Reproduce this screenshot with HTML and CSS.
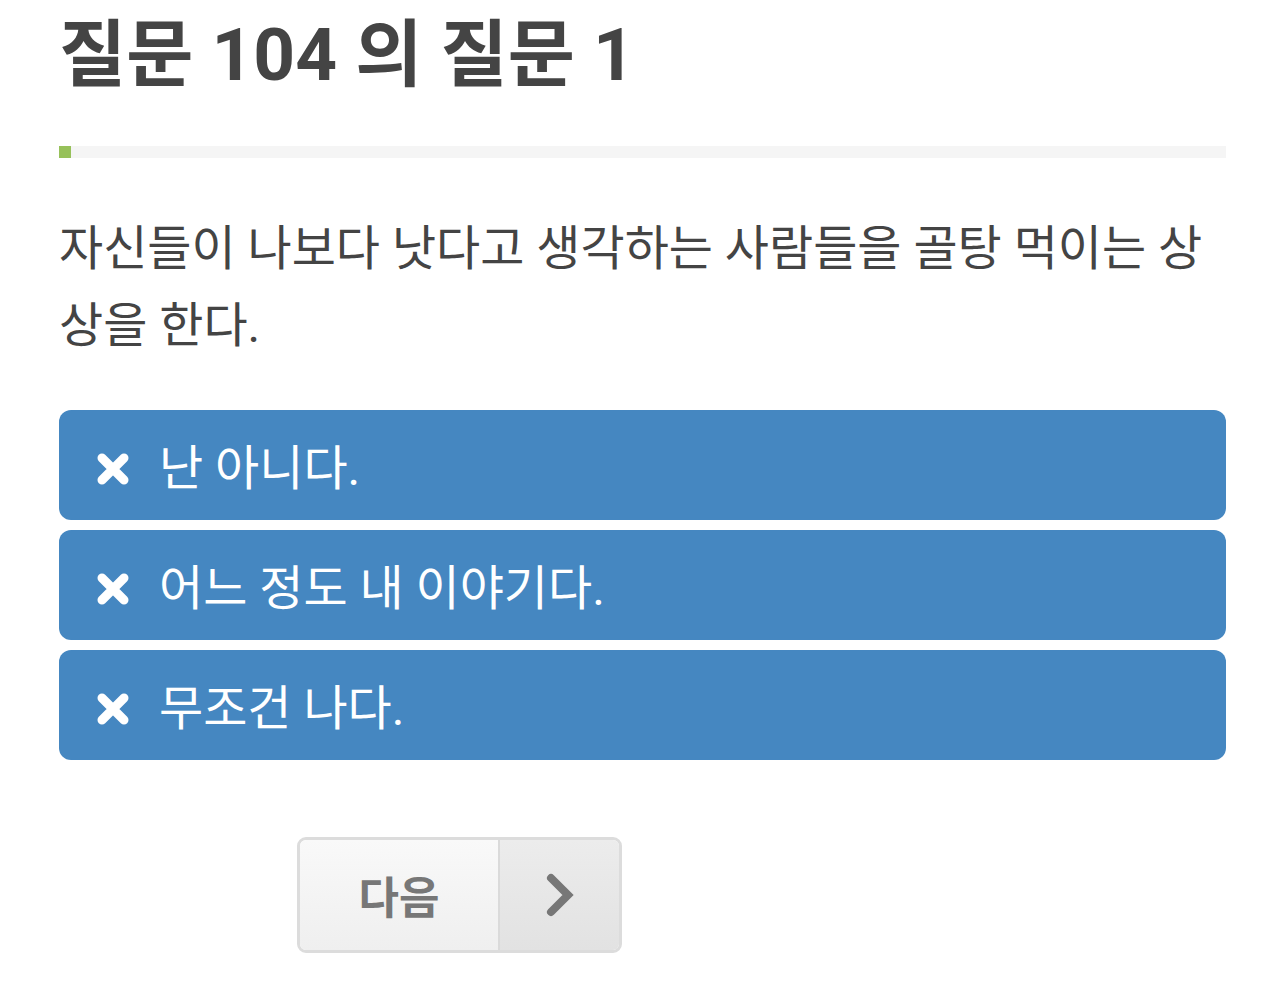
FILE: index.html
```html
<!DOCTYPE html>
<html lang="ko">
<head>
<meta charset="utf-8">
<link rel="stylesheet" href="styles.css">
</head>
<body>
<div class="page">
  <h1 class="title">질문 104 의 질문 1</h1>
  <div class="progress"><div class="progress-fill" style="width:12px"></div></div>
  <p class="question">자신들이 나보다 낫다고 생각하는 사람들을 골탕 먹이는 상상을 한다.</p>
  <div class="options">
    <div class="option">
      <svg class="x-icon" viewBox="0 0 34 34"><path d="M6 6 L28 28 M28 6 L6 28" stroke="#fff" stroke-width="9" stroke-linecap="round"/></svg>
      <span>난 아니다.</span>
    </div>
    <div class="option">
      <svg class="x-icon" viewBox="0 0 34 34"><path d="M6 6 L28 28 M28 6 L6 28" stroke="#fff" stroke-width="9" stroke-linecap="round"/></svg>
      <span>어느 정도 내 이야기다.</span>
    </div>
    <div class="option">
      <svg class="x-icon" viewBox="0 0 34 34"><path d="M6 6 L28 28 M28 6 L6 28" stroke="#fff" stroke-width="9" stroke-linecap="round"/></svg>
      <span>무조건 나다.</span>
    </div>
  </div>
  <div class="nav">
    <div class="next-btn">
      <span class="next-label">다음</span>
      <span class="next-arrow"><svg viewBox="0 0 30 44" width="30" height="44"><path d="M6 5 L23 22 L6 39" fill="none" stroke="#777" stroke-width="8" stroke-linecap="round" stroke-linejoin="miter"/></svg></span>
    </div>
  </div>
</div>
</body>
</html>
```
FILE: styles.css
```css
* { box-sizing: border-box; }
body {
  margin: 0;
  background: #fff;
  font-family: "Roboto", "Noto Sans CJK KR", sans-serif;
  color: #444;
}
.page {
  padding: 0 58px 0 59px;
  display: flex;
  flex-direction: column;
}
.title {
  margin: 10px 0 0 0;
  font-size: 73px;
  font-weight: 700;
  line-height: 90px;
  color: #444;
}
.progress {
  margin-top: 46px;
  height: 12px;
  background: #f5f5f5;
  display: flex;
}
.progress-fill {
  background: #97c15a;
  height: 100%;
}
.question {
  margin: 52px 0 0 0;
  font-size: 48px;
  line-height: 77px;
  font-weight: 400;
  color: #444;
}
.options {
  margin-top: 46px;
  display: flex;
  flex-direction: column;
  gap: 10px;
}
.option {
  height: 110px;
  background: #4587c1;
  border-radius: 12px;
  display: flex;
  align-items: center;
  padding-left: 100px;
  position: relative;
  color: #fff;
  font-size: 48px;
}
.x-icon {
  position: absolute;
  left: 37px;
  top: 42px;
  width: 34px;
  height: 34px;
}
.option span { margin-top: -2px; }
.nav {
  margin-top: 77px;
  padding-left: 238px;
  display: flex;
}
.next-btn {
  display: flex;
  width: 325px;
  height: 116px;
  border: 3px solid #dcdcdc;
  border-radius: 9px;
  overflow: hidden;
}
.next-label {
  width: 200px;
  display: flex;
  align-items: center;
  justify-content: center;
  font-size: 44px;
  font-weight: 700;
  color: #777;
  background: linear-gradient(#f9f9f9, #efefef);
  border-right: 2px solid #dadada;
}
.next-arrow {
  flex: 1;
  display: flex;
  align-items: center;
  justify-content: center;
  background: linear-gradient(#ececec, #e2e2e2);
}
```
